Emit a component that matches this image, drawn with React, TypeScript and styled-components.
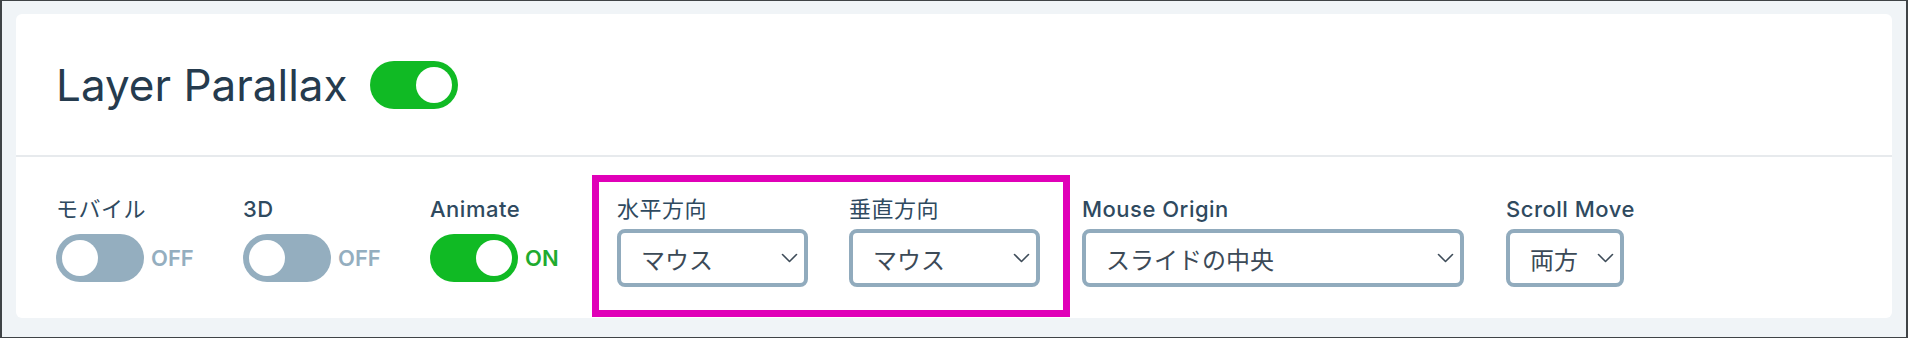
import { createGlobalStyle, styled } from 'styled-components';

const GlobalStyle = createGlobalStyle`
  * { box-sizing: border-box; }
  html, body { margin: 0; padding: 0; }
  body {
    font-family: Inter, "Noto Sans CJK JP", sans-serif;
    background: #3f4346;
  }
`;

const fields = [
  { label: 'モバイル', on: false, cjk: true },
  { label: '3D', on: false, cjk: false },
  { label: 'Animate', on: true, cjk: false },
];

const Chevron = () => (
  <svg width='17' height='10' viewBox='0 0 17 10' fill='none'>
    <path d='M1.5 1.5 L8.5 8.5 L15.5 1.5' stroke='#3e4c59' strokeWidth='1.6' strokeLinecap='round' strokeLinejoin='round' />
  </svg>
);

const Toggle = ({ on }: { on: boolean }) => (
  <Switch $on={on}>
    <Knob $on={on} />
  </Switch>
);

const Dropdown = ({ value, width }: { value: string; width: number }) => (
  <Select $width={width}>
    <span>{value}</span>
    <Chevron />
  </Select>
);

const App = () => {
  return (
    <>
      <GlobalStyle />
      <Page>
        <Card>
          <Header>
            <Title>Layer Parallax</Title>
            <Toggle on />
          </Header>
          <Body>
            {fields.map((f) => (
              <Field key={f.label} $width={145}>
                <Label $cjk={f.cjk}>{f.label}</Label>
                <Control>
                  <Toggle on={f.on} />
                  <State $on={f.on}>{f.on ? 'ON' : 'OFF'}</State>
                </Control>
              </Field>
            ))}
            <Highlight>
              <Field>
                <Label $cjk>水平方向</Label>
                <Control>
                  <Dropdown value='マウス' width={191} />
                </Control>
              </Field>
              <Field>
                <Label $cjk>垂直方向</Label>
                <Control>
                  <Dropdown value='マウス' width={191} />
                </Control>
              </Field>
              <Frame />
            </Highlight>
            <Field>
              <Label>Mouse Origin</Label>
              <Control>
                <Dropdown value='スライドの中央' width={382} />
              </Control>
            </Field>
            <Field>
              <Label>Scroll Move</Label>
              <Control>
                <Dropdown value='両方' width={118} />
              </Control>
            </Field>
          </Body>
        </Card>
      </Page>
    </>
  );
};

export default App;

const Page = styled.div`
  width: 1908px;
  height: 338px;
  background: #f0f4f7;
  border-style: solid;
  border-color: #3f4346;
  border-width: 1px 2px 1px 2px;
  padding: 13px 14px 19px 14px;
`;

const Card = styled.div`
  height: 100%;
  background: #ffffff;
  border-radius: 6px;
  display: flex;
  flex-direction: column;
`;

const Header = styled.div`
  height: 143px;
  display: flex;
  align-items: center;
  gap: 22px;
  padding: 0 40px;
  border-bottom: 2px solid #e7eaed;
`;

const Title = styled.h2`
  margin: 0;
  font-size: 44px;
  font-weight: 400;
  color: #253b4e;
`;

const Switch = styled.div<{ $on: boolean }>`
  width: 88px;
  height: 48px;
  border-radius: 24px;
  padding: 6px;
  display: flex;
  justify-content: ${(p) => (p.$on ? 'flex-end' : 'flex-start')};
  background: ${(p) => (p.$on ? '#10ba24' : '#94aebf')};
  flex-shrink: 0;
`;

const Knob = styled.div<{ $on: boolean }>`
  width: 36px;
  height: 36px;
  border-radius: 50%;
  background: #ffffff;
`;

const Body = styled.div`
  flex: 1;
  display: flex;
  align-items: flex-start;
  gap: 42px;
  padding: 38px 40px 0 40px;
`;

const Field = styled.div<{ $width?: number }>`
  display: flex;
  flex-direction: column;
  gap: 6px;
  width: ${(p) => (p.$width ? `${p.$width}px` : 'auto')};
`;

const Label = styled.div<{ $cjk?: boolean }>`
  font-size: 22px;
  line-height: 28px;
  font-weight: ${(p) => (p.$cjk ? 400 : 500)};
  color: #2f4a5f;
  white-space: nowrap;
  letter-spacing: 0.5px;
`;

const Control = styled.div`
  height: 58px;
  display: flex;
  align-items: center;
  gap: 7px;
`;

const State = styled.span<{ $on: boolean }>`
  font-size: 22px;
  font-weight: 600;
  color: ${(p) => (p.$on ? '#1fab2f' : '#94aebf')};
`;

const Select = styled.div<{ $width: number }>`
  width: ${(p) => p.$width}px;
  height: 58px;
  border: 4px solid #91abbd;
  border-radius: 8px;
  display: flex;
  align-items: center;
  justify-content: space-between;
  padding: 0 6px 0 20px;
  font-size: 24px;
  color: #3c4a57;
  white-space: nowrap;
`;

const Highlight = styled.div`
  position: relative;
  display: flex;
  gap: 41px;
`;

const Frame = styled.div`
  position: absolute;
  left: -25px;
  right: -30px;
  top: -20px;
  bottom: -30px;
  border: 7px solid #e000b8;
  pointer-events: none;
`;
